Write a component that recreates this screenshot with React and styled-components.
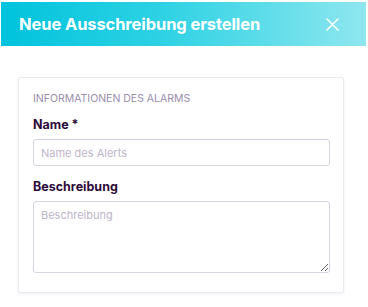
import React from 'react'
import styled, { createGlobalStyle } from 'styled-components'

const Global = createGlobalStyle`
  html, body {
    margin: 0;
    padding: 0;
    background: #ffffff;
    font-family: Inter, "Noto Sans", sans-serif;
  }
`

const Page = styled.div`
  width: 368px;
  height: 307px;
  padding: 2px 2px 0 1px;
  box-sizing: border-box;
  background: #ffffff;
`

const Header = styled.header`
  height: 44px;
  display: flex;
  align-items: center;
  justify-content: space-between;
  padding: 0 27px 0 18px;
  background: linear-gradient(90deg, #00c3dc 0%, #2fd2e4 45%, #8fe7ef 100%);
`

const Title = styled.h1`
  margin: 0;
  color: #ffffff;
  font-size: 16.5px;
  font-weight: 700;
  letter-spacing: -0.1px;
`

const Close = styled.button`
  border: 0;
  background: none;
  padding: 0;
  width: 13px;
  height: 13px;
  display: flex;
  cursor: pointer;
`

const Body = styled.div`
  padding: 31px 22px 0 17px;
`

const Card = styled.section`
  border: 1px solid #ece9f1;
  border-radius: 2px;
  box-shadow: 0 1px 3px rgba(60, 40, 90, 0.08);
  padding: 14px 13px 19px 14px;
  display: flex;
  flex-direction: column;
`

const Section = styled.h2`
  margin: 0 0 12px;
  font-size: 10.5px;
  font-weight: 400;
  color: #9a8eab;
  text-transform: uppercase;
  letter-spacing: 0;
`

const Label = styled.label`
  display: block;
  font-size: 12.5px;
  font-weight: 700;
  color: #2c0b3a;
  margin-bottom: 7px;
`

const Field = styled.div`
  margin-bottom: ${p => p.gap || 0}px;
`

const Input = styled.input`
  box-sizing: border-box;
  width: 100%;
  height: 27px;
  border: 1px solid #d8d4df;
  border-radius: 3px;
  padding: 0 7px;
  font: inherit;
  font-size: 11px;
  color: #2c0b3a;
  &::placeholder { color: #bdb5c9; }
`

const Area = styled.textarea`
  display: block;
  box-sizing: border-box;
  width: 100%;
  height: 72px;
  border: 1px solid #d8d4df;
  border-radius: 3px;
  padding: 6px 7px;
  font: inherit;
  font-size: 11px;
  color: #2c0b3a;
  &::placeholder { color: #bdb5c9; }
`

export default function App() {
  return (
    <Page>
      <Global />
      <Header>
        <Title>Neue Ausschreibung erstellen</Title>
        <Close aria-label="Schließen">
          <svg width="13" height="13" viewBox="0 0 13 13">
            <path d="M1 1L12 12M12 1L1 12" stroke="#ffffff" strokeWidth="1.5" strokeLinecap="round" />
          </svg>
        </Close>
      </Header>
      <Body>
        <Card>
          <Section>Informationen des Alarms</Section>
          <Field gap={13}>
            <Label>Name *</Label>
            <Input placeholder="Name des Alerts" />
          </Field>
          <Field>
            <Label>Beschreibung</Label>
            <Area placeholder="Beschreibung" />
          </Field>
        </Card>
      </Body>
    </Page>
  )
}
